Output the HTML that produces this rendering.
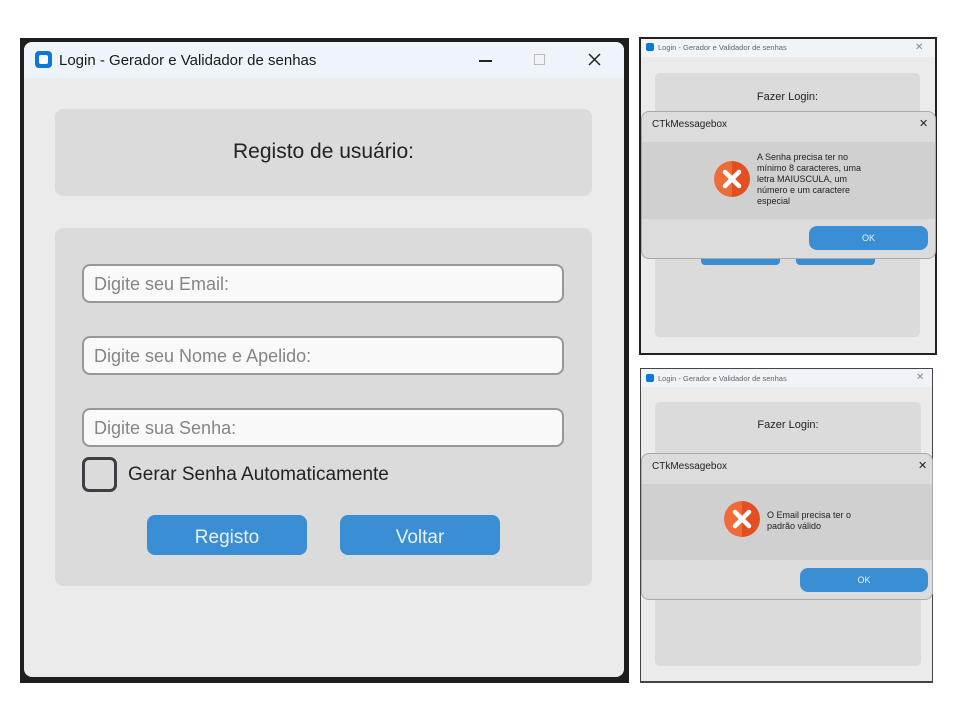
<!DOCTYPE html>
<html><head><meta charset="utf-8"><style>
*{margin:0;padding:0;box-sizing:border-box}
body{width:960px;height:720px;background:#fff;position:relative;overflow:hidden;font-family:"Liberation Sans",sans-serif}
.a{position:absolute}
.t{white-space:nowrap}
.entry{position:absolute;left:82px;width:482px;height:39px;border:2px solid #979797;border-radius:8px;background:#f9f9fa;color:#858585;font-size:18px;padding-left:10px;line-height:37px}
.btn{position:absolute;background:#3a8ed4;border-radius:8px;color:#e8f1fa;text-align:center}
.x{position:absolute;border-radius:50%;background:linear-gradient(90deg,#ef6c3a 50%,#e24f22 50%)}
</style></head><body>
<!-- main window -->
<div class="a" style="left:20px;top:38px;width:609px;height:645px;background:#1e1e1e"></div>
<div class="a" style="left:24px;top:42px;width:600px;height:635px;background:#ebebeb;border-radius:8px;overflow:hidden">
  <div class="a" style="left:0;top:0;width:600px;height:36px;background:#eef4f9"></div>
  <div class="a" style="left:11px;top:9px;width:17px;height:17px;border-radius:4px;background:#0b79d9"></div>
  <div class="a" style="left:15px;top:13px;width:9px;height:9px;border-radius:2px;background:#fff"></div>
  <div class="a t" style="left:35px;top:10px;font-size:15px;color:#1a1a1a">Login - Gerador e Validador de senhas</div>
  <div class="a" style="left:455px;top:18px;width:13px;height:1.5px;background:#222"></div>
  <div class="a" style="left:510px;top:12px;width:11px;height:11px;border:1px solid #bbb"></div>
  <svg class="a" style="left:564px;top:11px" width="13" height="13"><path d="M1 1L12 12M12 1L1 12" stroke="#222" stroke-width="1.5"/></svg>
  <div class="a" style="left:31px;top:67px;width:537px;height:87px;background:#dbdbdb;border-radius:8px"></div>
  <div class="a t" style="left:31px;top:98px;width:537px;text-align:center;font-size:21px;color:#222">Registo de usuário:</div>
  <div class="a" style="left:31px;top:186px;width:537px;height:358px;background:#dbdbdb;border-radius:8px"></div>
</div>
<div class="entry" style="top:264px">Digite seu Email:</div>
<div class="entry" style="top:336px">Digite seu Nome e Apelido:</div>
<div class="entry" style="top:408px">Digite sua Senha:</div>
<div class="a" style="left:82px;top:457px;width:35px;height:35px;border:3px solid #3c3f45;border-radius:7px"></div>
<div class="a t" style="left:128px;top:464px;font-size:19px;color:#222">Gerar Senha Automaticamente</div>
<div class="btn" style="left:147px;top:515px;width:160px;height:40px;line-height:40px;padding-top:3px;font-size:19px">Registo</div>
<div class="btn" style="left:340px;top:515px;width:160px;height:40px;line-height:40px;padding-top:3px;font-size:19px">Voltar</div>

<!-- top right window -->
<div class="a" style="left:639px;top:37px;width:298px;height:318px;background:#222"></div>
<div class="a" style="left:641px;top:39px;width:294px;height:314px;background:#ebebeb">
  <div class="a" style="left:0;top:0;width:294px;height:18px;background:#f0f4f8"></div>
  <div class="a" style="left:5px;top:4px;width:8px;height:8px;border-radius:2px;background:#0b79d9"></div>
  <div class="a t" style="left:17px;top:4px;font-size:7.5px;color:#666">Login - Gerador e Validador de senhas</div>
  <div class="a t" style="left:274px;top:3px;font-size:10px;color:#888">✕</div>
  <div class="a" style="left:14px;top:34px;width:265px;height:264px;background:#dbdbdb;border-radius:5px"></div>
  <div class="a t" style="left:14px;top:52px;width:265px;text-align:center;font-size:11px;color:#222">Fazer Login:</div>
  <div class="a" style="left:60px;top:215px;width:79px;height:11px;background:#3a8ed4;border-radius:4px"></div>
  <div class="a" style="left:155px;top:215px;width:79px;height:11px;background:#3a8ed4;border-radius:4px"></div>
</div>
<div class="a" style="left:641px;top:111px;width:295px;height:148px;background:#dcdcdc;border:1px solid #aaa;border-radius:8px;overflow:hidden">
  <div class="a t" style="left:10px;top:7px;font-size:10px;color:#222">CTkMessagebox</div>
  <div class="a t" style="left:277px;top:5px;font-size:11px;color:#222">✕</div>
  <div class="a" style="left:0;top:30px;width:295px;height:77px;background:#d0d0d0"></div>
  <div class="a t" style="left:115px;top:40px;font-size:9px;line-height:11px;color:#222">A Senha precisa ter no<br>mínimo 8 caracteres, uma<br>letra MAIUSCULA, um<br>número e um caractere<br>especial</div>
  <div class="btn" style="left:167px;top:114px;width:119px;height:24px;line-height:24px;font-size:9px">OK</div>
</div>
<div class="x" style="left:714px;top:161px;width:36px;height:36px"></div>
<svg class="a" style="left:714px;top:161px" width="36" height="36"><path d="M11 11L25 25M25 11L11 25" stroke="#fff" stroke-width="4.5" stroke-linecap="round"/></svg>

<!-- bottom right window -->
<div class="a" style="left:640px;top:368px;width:293px;height:315px;background:#444"></div>
<div class="a" style="left:641px;top:369px;width:291px;height:312px;background:#ebebeb">
  <div class="a" style="left:0;top:0;width:291px;height:18px;background:#f0f4f8"></div>
  <div class="a" style="left:5px;top:5px;width:8px;height:8px;border-radius:2px;background:#0b79d9"></div>
  <div class="a t" style="left:17px;top:5px;font-size:7.5px;color:#666">Login - Gerador e Validador de senhas</div>
  <div class="a t" style="left:275px;top:3px;font-size:10px;color:#888">✕</div>
  <div class="a" style="left:14px;top:33px;width:266px;height:264px;background:#dbdbdb;border-radius:5px"></div>
  <div class="a t" style="left:14px;top:50px;width:266px;text-align:center;font-size:11px;color:#222">Fazer Login:</div>
</div>
<div class="a" style="left:641px;top:453px;width:292px;height:147px;background:#dcdcdc;border:1px solid #aaa;border-radius:8px;overflow:hidden">
  <div class="a t" style="left:10px;top:7px;font-size:10px;color:#222">CTkMessagebox</div>
  <div class="a t" style="left:276px;top:5px;font-size:11px;color:#222">✕</div>
  <div class="a" style="left:0;top:30px;width:292px;height:76px;background:#d0d0d0"></div>
  <div class="a t" style="left:125px;top:56px;font-size:9px;line-height:11px;color:#222">O Email precisa ter o<br>padrão válido</div>
  <div class="btn" style="left:158px;top:114px;width:128px;height:24px;line-height:24px;font-size:9px">OK</div>
</div>
<div class="x" style="left:724px;top:501px;width:36px;height:36px"></div>
<svg class="a" style="left:724px;top:501px" width="36" height="36"><path d="M11 11L25 25M25 11L11 25" stroke="#fff" stroke-width="4.5" stroke-linecap="round"/></svg>
</body></html>
